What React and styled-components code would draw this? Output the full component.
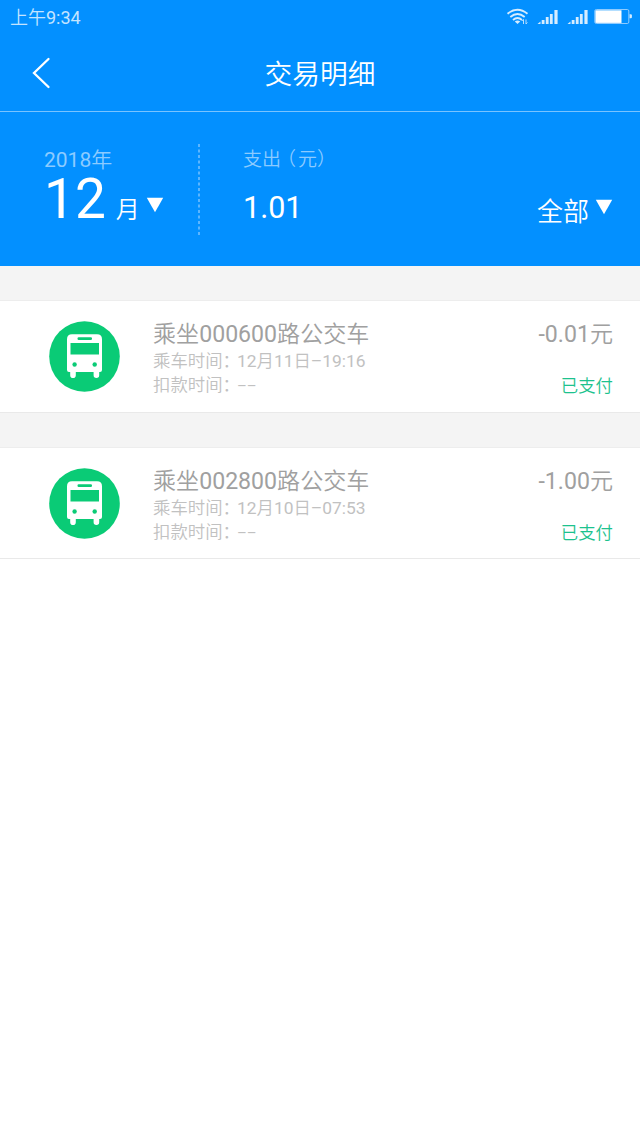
import React from "react";
import styled, { createGlobalStyle } from "styled-components";

const GlobalStyle = createGlobalStyle`
  * {
    box-sizing: border-box;
  }
  body {
    margin: 0;
    background: #ffffff;
    font-family: Roboto, "Noto Sans CJK SC DemiLight", "Noto Sans CJK SC", sans-serif;
    font-weight: 400;
  }
`;

const Container = styled.div`
  display: flex;
  flex-direction: column;
  width: 640px;
  height: 1138px;
  background: #ffffff;
`;

const StatusBar = styled.div`
  display: flex;
  justify-content: space-between;
  align-items: center;
  height: 34px;
  padding: 0 8px 0 10px;
  background: #0390ff;
`;

const Clock = styled.span`
  padding-top: 1px;
  font-size: 18px;
  line-height: 34px;
  color: #c4e4ff;
`;

const NavBar = styled.div`
  display: grid;
  grid-template-columns: 80px 1fr 80px;
  align-items: center;
  height: 78px;
  border-bottom: 1px solid #79c3ff;
  background: #0390ff;
`;

const BackButton = styled.button`
  display: flex;
  padding: 0 0 0 31px;
  border: none;
  background: none;
`;

const Title = styled.h1`
  margin: 0;
  padding-top: 5px;
  font-size: 27.7px;
  line-height: 72px;
  font-weight: 400;
  text-align: center;
  color: #ffffff;
`;

const Summary = styled.div`
  display: flex;
  height: 154px;
  padding: 32px 27px 0 44px;
  background: #0390ff;
  color: #ffffff;
`;

const MonthBox = styled.div`
  width: 154px;
  height: 91px;
`;

const Label = styled.div`
  padding-top: ${(props) => props.$top};
  font-size: ${(props) => props.$size};
  line-height: 30px;
  height: 30px;
  color: #8ccbff;
`;

const OpenParen = styled.span`
  margin: 0 2px 0 -4px;
`;

const MonthRow = styled.div`
  display: flex;
  align-items: baseline;
  height: 56px;
  line-height: 50px;
`;

const MonthNumber = styled.span`
  font-size: 55px;
`;

const MonthUnit = styled.span`
  margin-left: 10px;
  font-size: 24px;
`;

const Caret = styled.svg`
  margin-left: 6px;
  align-self: flex-start;
  margin-top: ${(props) => props.$top};
`;

const SpendBox = styled.div`
  flex: 1;
  padding-left: 43px;
`;

const Spend = styled.div`
  margin-top: 16px;
  font-size: 30.5px;
  line-height: 36px;
`;

const Filter = styled.div`
  display: flex;
  height: 40px;
  margin-top: 46px;
  font-size: 26px;
  line-height: 44px;
`;

const List = styled.div`
  display: flex;
  flex-direction: column;
`;

const Item = styled.div`
  display: flex;
  height: 146.5px;
  padding: 55px 27px 0 49px;
  border-bottom: 1px solid #e9e9e9;
  background: linear-gradient(#f4f4f4 34px, #ededed 34px, #ededed 35px, #ffffff 35px);
`;

const ItemText = styled.div`
  flex: 1;
  margin-left: 33px;
`;

const ItemTitle = styled.div`
  height: 28px;
  font-size: 23.1px;
  line-height: 27px;
  color: #a0a0a0;
`;

const ItemLine = styled.div`
  height: 24px;
  font-size: 17.4px;
  line-height: 24px;
  color: #c1c1c1;
`;

const Value = styled.span`
  margin-left: -3px;
`;

const Dashes = styled(Value)`
  font-size: 15px;
`;

const ItemSide = styled.div`
  text-align: right;
`;

const Paid = styled.div`
  margin-top: 25px;
  font-size: 17.4px;
  line-height: 24px;
  color: #1dc28e;
`;

const records = [
  { route: "000600", time: "12月11日–19:16", amount: "-0.01元" },
  { route: "002800", time: "12月10日–07:53", amount: "-1.00元" },
];

const Down = ({ top }) => (
  <Caret $top={top} width="18" height="16" viewBox="0 0 18 16">
    <path d="M0.8 0.8h16.4L9 15.2z" fill="#fff" />
  </Caret>
);

const StatusIcons = () => (
  <svg width="126" height="20" viewBox="506 7 126 20">
    <g fill="none" stroke="#d5ecff" strokeWidth="1.9">
      <path d="M507.5 13.8Q517.5 5.8 527.5 13.8" />
      <path d="M510.3 17Q517.5 11.2 524.7 17" />
      <path d="M513 20Q517.5 16.2 522 20" />
    </g>
    <path d="M514.8 21.4Q517.5 19.6 520.2 21.4L517.5 24z" fill="#d5ecff" />
    <path d="M523.5 24v-4.5M522.2 21l1.3-1.5M526 19.5V24M526 24l1.4-1.5" stroke="#b8deff" fill="none" />
    <g fill="#d5ecff">
      {[538, 568].map((x) => (
        <g key={x}>
          <path d={`M${x - 0.5} 24l3-2.5V24z`} />
          <rect x={x + 3.7} y="20" width="2.8" height="4" />
          <rect x={x + 7.8} y="17" width="2.8" height="7" />
          <rect x={x + 11.9} y="14" width="2.8" height="10" />
          <rect x={x + 16.4} y="10" width="3.2" height="14" />
        </g>
      ))}
      <rect x="595.3" y="10.3" width="26.2" height="12.6" fill="#fff" />
      <path d="M629.5 14.2h1.4q1 0 1 1v2q0 1-1 1h-1.4z" />
    </g>
    <rect x="594.8" y="9.5" width="34" height="14" rx="1.5" fill="none" stroke="#8fcbff" />
  </svg>
);

const BusIcon = () => (
  <svg width="71" height="71" viewBox="0 0 71 71">
    <circle cx="35.5" cy="35.5" r="35.3" fill="#0acb76" />
    <path
      d="M23 13.3h25q5 0 5 5V49q0 2-2 2h-.8v3.3a2.8 2.8 0 0 1-5.6 0V51H26.8v3.3a2.8 2.8 0 0 1-5.6 0V51H20q-2 0-2-2V18.3q0-5 5-5z"
      fill="#fff"
    />
    <rect x="28.5" y="16.3" width="14.5" height="2.6" rx="1.2" fill="#0acb76" />
    <rect x="21.5" y="22" width="28.5" height="11.5" fill="#0acb76" />
    <circle cx="25.6" cy="43.5" r="2.2" fill="#0acb76" />
    <circle cx="45.7" cy="43.5" r="2.2" fill="#0acb76" />
  </svg>
);

const App = () => {
  return (
    <Container>
      <GlobalStyle />
      <StatusBar>
        <Clock>上午9:34</Clock>
        <StatusIcons />
      </StatusBar>
      <NavBar>
        <BackButton>
          <svg width="20" height="32" viewBox="0 0 20 32">
            <path d="M17.5 2L3 16l14.5 14" fill="none" stroke="#fff" strokeWidth="2.3" strokeLinecap="round" />
          </svg>
        </BackButton>
        <Title>交易明细</Title>
      </NavBar>
      <Summary>
        <MonthBox>
          <Label $size="21px" $top="1px">2018年</Label>
          <MonthRow>
            <MonthNumber>12</MonthNumber>
            <MonthUnit>月</MonthUnit>
            <Down top="23px" />
          </MonthRow>
        </MonthBox>
        <svg width="2" height="91">
          <path d="M1 0v91" stroke="#5cb5ff" strokeWidth="2" strokeDasharray="3 2.5" />
        </svg>
        <SpendBox>
          <Label $size="19px" $top="1px">
            支出<OpenParen>（</OpenParen>元）
          </Label>
          <Spend>1.01</Spend>
        </SpendBox>
        <Filter>
          <span>全部</span>
          <Down top="9px" />
        </Filter>
      </Summary>
      <List>
        {records.map((item) => {
          return (
            <Item key={item.route}>
              <BusIcon />
              <ItemText>
                <ItemTitle>乘坐{item.route}路公交车</ItemTitle>
                <ItemLine>
                  乘车时间：<Value>{item.time}</Value>
                </ItemLine>
                <ItemLine>
                  扣款时间：<Dashes>––</Dashes>
                </ItemLine>
              </ItemText>
              <ItemSide>
                <ItemTitle>{item.amount}</ItemTitle>
                <Paid>已支付</Paid>
              </ItemSide>
            </Item>
          );
        })}
      </List>
    </Container>
  );
};

export default App;
